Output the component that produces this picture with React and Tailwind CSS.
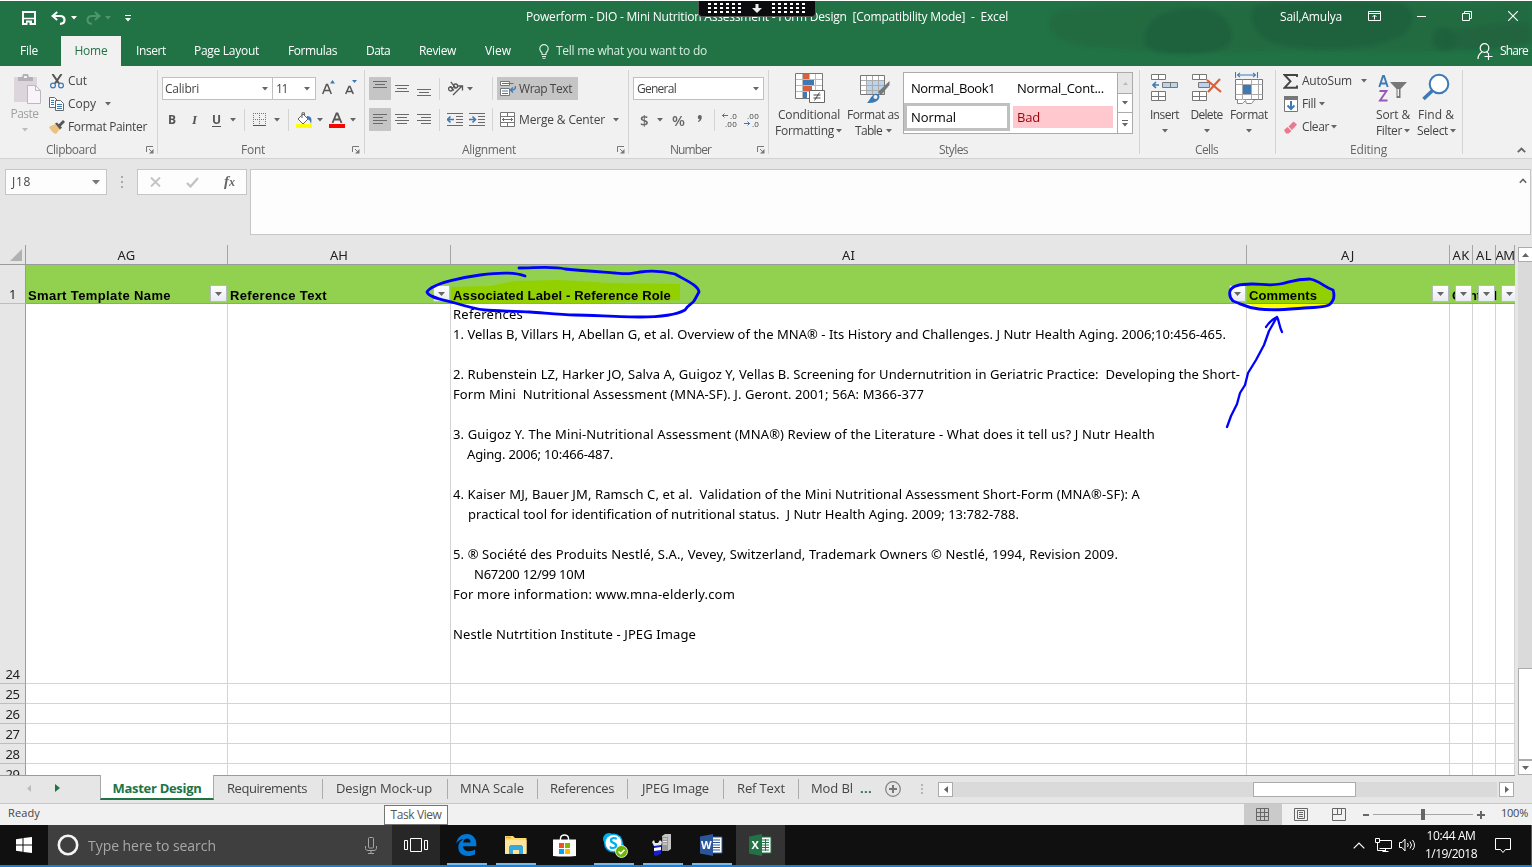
import React, { useLayoutEffect, useRef, useState } from "react";

/* Text set to a given width: the tracking is derived from the measured run. */
function Fit({ w, className = "", children }) {
  const ref = useRef(null);
  const [tracking, setTracking] = useState(0);
  useLayoutEffect(() => {
    const natural = ref.current.getBoundingClientRect().width;
    setTracking((w - natural) / Math.max(1, String(children).length));
  }, []);
  return (
    <span className={"inline-block shrink-0 whitespace-pre " + className} style={{ width: w }}>
      <span ref={ref} style={{ letterSpacing: tracking }}>{children}</span>
    </span>
  );
}

function Icon({ w, h, className = "", children }) {
  return (
    <svg width={w} height={h} viewBox={`0 0 ${w} ${h}`} className={"block shrink-0 " + className} fill="none">
      {children}
    </svg>
  );
}

const Caret = ({ className = "text-[#666]" }) => (
  <Icon w={6} h={4} className={className}><path d="M0 0h6L3 3.5z" fill="currentColor" /></Icon>
);

const Rule = ({ className = "" }) => <div className={"w-px shrink-0 bg-[#d4d4d4] " + className} />;

const Launcher = ({ className = "" }) => (
  <Icon w={8} h={8} className={className}>
    <path d="M.5 6V.5H7" stroke="#777" />
    <path d="M3 3l3 3" stroke="#777" />
    <path d="M7.5 3v4.5H3z" fill="#777" />
  </Icon>
);

/* ---------- Title bar ---------- */

function TitleBar() {
  return (
    <div className="flex h-[35px] items-start text-[12px] leading-[16px] text-white">
      <Icon w={14} h={14} className="ml-[22px] mt-[10px]">
        <path d="M1 1h12v12H1z" stroke="#fff" strokeWidth="2" />
        <path d="M2 7.5h10" stroke="#fff" strokeWidth="1.5" />
        <path d="M4 9.5h6V14H4z" fill="#fff" />
        <path d="M5.5 11.5h2V14h-2z" fill="#217346" />
      </Icon>
      <Icon w={15} h={14} className="ml-[15px] mt-[10px]">
        <path d="M6.2 1L1.5 5l4.7 4" stroke="#fff" strokeWidth="2" />
        <path d="M2 5h7c3 0 4.500 1.700 4.500 4S12 12.800 9 12.800" stroke="#fff" strokeWidth="2.200" />
      </Icon>
      <div className="ml-[5px] mt-[15px]"><Caret className="text-white" /></div>
      <Icon w={15} h={14} className="ml-[9px] mt-[10px]">
        <path d="M8.800 1l4.700 4-4.700 4" stroke="#4f9570" strokeWidth="2" />
        <path d="M13 5H6C3 5 1.500 6.700 1.500 9S3 12.800 6 12.800" stroke="#4f9570" strokeWidth="2" />
      </Icon>
      <div className="ml-[4px] mt-[15px]"><Caret className="text-[#4f9570]" /></div>
      <Icon w={6} h={7} className="ml-[14px] mt-[14px]">
        <path d="M0 .5h6" stroke="#fff" /><path d="M0 3h6L3 6.500z" fill="#fff" />
      </Icon>
      <Fit w={482} className="ml-[395px] mt-[8px]">Powerform - DIO - Mini Nutrition Assessment - Form Design  [Compatibility Mode]  -  Excel</Fit>
      <Fit w={62} className="ml-[272px] mt-[8px]">Sail,Amulya</Fit>
      <Icon w={13} h={10} className="ml-[26px] mt-[10px]">
        <path d="M.5.5h12v9H.5zM.5 2.500h12M6.500 8.500V4.500M4.500 6l2-2 2 2" stroke="#fff" />
      </Icon>
      <div className="ml-[36px] mt-[15px] h-px w-[9px] bg-white" />
      <Icon w={10} h={10} className="ml-[36px] mt-[10px]">
        <path d="M.5 2.500h7v7h-7zM2.500 2.500v-2h7v7h-2" stroke="#fff" />
      </Icon>
      <Icon w={10} h={10} className="ml-[36px] mt-[10px]"><path d="M0 0l10 10M10 0L0 10" stroke="#fff" strokeWidth="1.100" /></Icon>
    </div>
  );
}

function RibbonTabs() {
  return (
    <div className="flex h-[30px] items-center text-[12px] leading-[16px] text-white">
      <Fit w={18} className="ml-[20px]">File</Fit>
      <div className="ml-[23px] flex h-[30px] w-[60px] items-center justify-center bg-[#f1f1f1] text-[#217346]"><Fit w={33}>Home</Fit></div>
      <Fit w={30} className="ml-[15px]">Insert</Fit>
      <Fit w={65} className="ml-[28px]">Page Layout</Fit>
      <Fit w={49} className="ml-[29px]">Formulas</Fit>
      <Fit w={24} className="ml-[29px]">Data</Fit>
      <Fit w={37} className="ml-[29px]">Review</Fit>
      <Fit w={26} className="ml-[29px]">View</Fit>
      <Icon w={10} h={15} className="ml-[28px]">
        <path d="M3 10.500V9C1.500 7.500.8 6.500.8 4.800a4.200 4.200 0 0 1 8.400 0C9.200 6.500 8.500 7.500 7 9v1.500z" stroke="#d6ecdf" strokeWidth="1.200" />
        <path d="M3 12.500h4M3.500 14.300h3" stroke="#d6ecdf" />
      </Icon>
      <Fit w={151} className="ml-[7px] text-[#d6ecdf]">Tell me what you want to do</Fit>
      <Icon w={16} h={17} className="ml-[770px]">
        <circle cx="7.500" cy="5" r="4.300" stroke="#fff" strokeWidth="1.200" />
        <path d="M1 16c0-3.500 1.500-5.500 4-7M9.500 8.800l1.500 1.200M7.500 13.500h8M11.500 10v7" stroke="#fff" strokeWidth="1.200" />
      </Icon>
      <Fit w={28} className="ml-[7px]">Share</Fit>
    </div>
  );
}

/* Brushed darker patches at the right end of the title bar. */
function Brush() {
  return (
    <svg className="absolute left-[1030px] top-0" width="502" height="65">
      <defs><filter id="soft" x="-10%" y="-20%" width="120%" height="140%"><feGaussianBlur stdDeviation="2" /></filter></defs>
      <g fill="#1e613c" filter="url(#soft)">
        <path d="M25 10q80-14 160-6l40-4h150q60 6 127-2v44q-80 14-250 8-100 6-190-4-60-6-37-36z" opacity=".45" />
        <path d="M160 8q30-4 40 18t-22 25q-22 4-50 0-20-6-12-22 8-20 44-21z" opacity=".9" />
        <path d="M224 5q50-8 146-3 22 8 6 30-20 14-76 16-50 0-68-12-16-14-8-31z" opacity=".9" />
        <circle cx="414" cy="38" r="12" opacity=".9" /><path d="M414 32q50-12 88-10v20q-40 10-88 6z" opacity=".6" />
      </g>
    </svg>
  );
}

function Header() {
  return (
    <div className="relative h-[66px] overflow-hidden border-t border-white bg-[#217346]">
      <Brush />
      <div className="relative"><TitleBar /><RibbonTabs /></div>
      <div className="absolute left-[698px] top-[-1px] flex h-[17px] w-[118px] items-center justify-center gap-[10px] rounded-b-[4px] border-x border-b border-[#555] bg-[#0c0c10]">
        <DotGrid />
        <Icon w={10} h={9}><path d="M3.500 0h3v4H10L5 9 0 4h3.500z" fill="#eee" /></Icon>
        <DotGrid />
      </div>
    </div>
  );
}

const DotGrid = () => (
  <Icon w={34} h={10}>
    {[0, 1, 2, 3, 4, 5].map((x) => [0, 1, 2].map((y) => (
      <rect key={x + "-" + y} x={x * 6} y={y * 4} width="3" height="2" fill="#fff" />
    )))}
  </Icon>
);

/* ---------- Ribbon ---------- */

function Group({ label, w, labelClass, width, launcher, children }) {
  return (
    <div className={"flex shrink-0 " + width}>
      <div className="flex min-w-0 flex-1 flex-col">
        <div className="flex h-[76px]">{children}</div>
        <div className="flex h-[17px] items-center leading-[16px] text-[#666]">
          <Fit w={w} className={labelClass}>{label}</Fit>
          {launcher && <Launcher className={launcher} />}
        </div>
      </div>
      <Rule className="mt-[4px] h-[84px]" />
    </div>
  );
}

function Clipboard() {
  return (
    <Group label="Clipboard" w={50} labelClass="ml-[46px]" width="w-[158px]" launcher="ml-[50px]">
      <div className="flex w-[49px] flex-col items-center leading-[16px] text-[#a0a0a0]">
        <Icon w={29} h={31} className="ml-[5px] mt-[8px]">
          <path d="M1 3h23v25H1z" fill="#dcd6dc" /><path d="M5 7V3h4l1-3h5l1 3h4v4z" fill="#b5b0b5" /><path d="M11 2h3v2h-3z" fill="#f1f1f1" />
          <path d="M14.500 11.500h8l5 5v13h-13z" fill="#f8f4fa" stroke="#bcb8bf" /><path d="M22.500 11.500v5h5" stroke="#bcb8bf" />
        </Icon>
        <Fit w={28} className="mt-px">Paste</Fit>
        <div className="mt-[6px]"><Caret className="text-[#bbb]" /></div>
      </div>
      <div className="flex flex-col pt-[4px] leading-[16px]">
        <div className="flex h-[22px] items-center">
          <Icon w={14} h={15} className="ml-[1px]">
            <path d="M2.500 0L9 9.500M11.500 0L5 9.500" stroke="#555" strokeWidth="2" />
            <circle cx="3" cy="11.500" r="2.400" stroke="#3e79b4" strokeWidth="1.200" /><circle cx="11" cy="11.500" r="2.400" stroke="#3e79b4" strokeWidth="1.200" />
          </Icon>
          <Fit w={19} className="ml-[4px]">Cut</Fit>
        </div>
        <div className="mt-[1px] flex h-[22px] items-center">
          <Icon w={15} h={14}>
            <path d="M.5.500h5l3 3v7h-8z" fill="#fff" stroke="#666" /><path d="M2 3.500h3M2 5.500h3M2 7.500h3" stroke="#3e79b4" />
            <path d="M6.500 3.500h5l3 3v7h-8z" fill="#fff" stroke="#666" /><path d="M8 7.500h5M8 9.500h5M8 11.500h5" stroke="#3e79b4" />
          </Icon>
          <Fit w={28} className="ml-[4px]">Copy</Fit>
          <div className="ml-[9px]"><Caret /></div>
        </div>
        <div className="mt-[1px] flex h-[22px] items-center">
          <Icon w={16} h={14}>
            <path d="M0 7l6-3 5 5-4 5q-4-1-7-7z" fill="#ecc281" /><path d="M6 3.500l2-1 5 5-2 2z" fill="#555" /><path d="M9.500 4.500L14 0l2 2-4.500 4.500z" fill="#555" />
          </Icon>
          <Fit w={79} className="ml-[3px]">Format Painter</Fit>
        </div>
      </div>
    </Group>
  );
}

function FontGroup() {
  return (
    <Group label="Font" w={24} labelClass="ml-[83px]" width="w-[207px]" launcher="ml-[87px]">
      <div className="flex flex-col leading-[16px]">
        <div className="mt-[11px] flex h-[23px]">
          <div className="ml-[4px] flex w-[111px] items-center border border-[#c0c0c0] bg-white"><Fit w={34} className="ml-[2px]">Calibri</Fit><div className="ml-[63px]"><Caret /></div></div>
          <div className="ml-[-1px] flex w-[44px] items-center border border-[#c0c0c0] bg-white"><Fit w={11} className="ml-[3px]">11</Fit><div className="ml-[17px]"><Caret /></div></div>
          <Icon w={13} h={15} className="ml-[6px] mt-[3px]"><path d="M.7 14L4.500 4.500h1L9.300 14M2 10.500h6" stroke="#555" strokeWidth="1.500" /><path d="M8 3.500h5L10.500 0z" fill="#3e79b4" /></Icon>
          <Icon w={12} h={15} className="ml-[10px] mt-[3px]"><path d="M.7 14L4 6.500h1L8.300 14M2 11.500h5" stroke="#555" strokeWidth="1.500" /><path d="M7 0h5L9.500 3z" fill="#3e79b4" /></Icon>
        </div>
        <div className="mt-[8px] flex h-[23px] items-center font-bold text-[#555]">
          <Fit w={8} className="ml-[10px]">B</Fit>
          <Fit w={6} className="ml-[16px] font-['Liberation_Serif',serif] text-[13px] italic">I</Fit>
          <Fit w={9} className="ml-[14px] mt-px border-b border-[#555] leading-[12px]">U</Fit>
          <div className="ml-[9px]"><Caret /></div>
          <Rule className="ml-[8px] h-[22px]" />
          <Icon w={13} h={13} className="ml-[8px]"><path d="M.5 0v12M6.500 0v12M12.500 0v12M0 .5h13M0 6.500h13" stroke="#777" strokeDasharray="1 1" /><path d="M0 12.500h13" stroke="#555" /></Icon>
          <div className="ml-[8px]"><Caret /></div>
          <Rule className="ml-[8px] h-[22px]" />
          <Icon w={17} h={16} className="ml-[7px]">
            <path d="M2 7l5-5 5 5-5 5z" fill="#fff" stroke="#666" /><path d="M6 6V.8h2.500V4" stroke="#666" /><path d="M11 4c5 0 5 4 4 8-1-3-1-4-4-5z" fill="#3e79b4" /><path d="M0 12h16v4H0z" fill="#ff0" />
          </Icon>
          <div className="ml-[4px]"><Caret /></div>
          <Icon w={16} h={16} className="ml-[6px]"><path d="M3.500 11L7.500 1.500h1L12.500 11M5 7.500h6" stroke="#555" strokeWidth="1.800" /><path d="M0 12h16v4H0z" fill="#f00" /></Icon>
          <div className="ml-[5px]"><Caret /></div>
        </div>
      </div>
    </Group>
  );
}

const Lines = ({ d }) => <Icon w={14} h={15}><path d={d} stroke="#6a6a6a" /></Icon>;

function AlignmentGroup() {
  return (
    <Group label="Alignment" w={54} labelClass="ml-[97px]" width="w-[264px]" launcher="ml-[101px]">
      <div className="flex flex-col leading-[16px]">
        <div className="mt-[11px] flex h-[23px] items-center">
          <div className="ml-[4px] flex h-[23px] w-[22px] items-center justify-center bg-[#c5c5c5]"><Lines d="M0 .5h14M2 3.500h10M0 6.500h14" /></div>
          <div className="flex w-[22px] justify-center"><Lines d="M0 4.500h14M2 7.500h10M0 10.500h14" /></div>
          <div className="flex w-[22px] justify-center"><Lines d="M0 8.500h14M2 11.500h10M0 14.500h14" /></div>
          <Rule className="ml-[4px] h-[22px]" />
          <Icon w={17} h={15} className="ml-[7px]">
            <g stroke="#555" strokeWidth="1.300">
              <circle cx="3.600" cy="8" r="2" /><path d="M3.300 5.300l3.500 4.200" />
              <circle cx="8.600" cy="5" r="2" /><path d="M3.800.8l4.700 6" />
              <path d="M6 14l8.500-8.500M11 5h4.500v4.500" />
            </g>
          </Icon>
          <div className="ml-[3px]"><Caret /></div>
          <Rule className="ml-[19px] h-[23px]" />
          <div className="ml-[4px] flex h-[23px] w-[81px] items-center bg-[#c5c5c5]">
            <Icon w={16} h={15} className="ml-[3px]">
              <path d="M.5.500h9v4h-9zM.5 7.500h9v7h-9z" fill="#fff" stroke="#777" /><path d="M2 2.500h11.500M2 10h6M2 12.500h6" stroke="#3e79b4" /><path d="M15.500 5c0 4-2 4-4.500 4M13 6.500L10.500 9l2.500 2.500" stroke="#3e79b4" strokeWidth="1.400" />
            </Icon>
            <Fit w={53} className="ml-[3px]">Wrap Text</Fit>
          </div>
        </div>
        <div className="mt-[8px] flex h-[23px] items-center">
          <div className="ml-[4px] flex h-[23px] w-[22px] items-center justify-center bg-[#c5c5c5]"><Lines d="M0 2.500h14M0 5.500h10M0 8.500h14M0 11.500h10" /></div>
          <div className="flex w-[22px] justify-center"><Lines d="M0 2.500h14M2 5.500h10M0 8.500h14M2 11.500h10" /></div>
          <div className="flex w-[22px] justify-center"><Lines d="M0 2.500h14M4 5.500h10M0 8.500h14M4 11.500h10" /></div>
          <Rule className="ml-[4px] h-[22px]" />
          <Icon w={16} h={13} className="ml-[7px]"><path d="M0 .5h16M9 3.500h7M9 6.500h7M9 9.500h7M0 12.500h16" stroke="#6a6a6a" /><path d="M1 6.500h6M3.500 3.500l-3 3 3 3" stroke="#3e79b4" strokeWidth="1.600" /></Icon>
          <Icon w={16} h={13} className="ml-[6px]"><path d="M0 .5h16M9 3.500h7M9 6.500h7M9 9.500h7M0 12.500h16" stroke="#6a6a6a" /><path d="M0 6.500h6M3.500 3.500l3 3-3 3" stroke="#3e79b4" strokeWidth="1.600" /></Icon>
          <Rule className="ml-[7px] h-[23px]" />
          <Icon w={15} h={15} className="ml-[7px]"><path d="M.5.500h14v14H.5zM.5 4.500h14M.5 10.500h14M7.500.500v4M7.500 10.500v4" fill="#fff" stroke="#777" /><path d="M2 7.500h11M4 6L2.500 7.500 4 9M11 6l1.500 1.500L11 9" stroke="#3e79b4" /></Icon>
          <Fit w={86} className="ml-[4px]">Merge &amp; Center</Fit>
          <div className="ml-[8px]"><Caret /></div>
        </div>
      </div>
    </Group>
  );
}

function NumberGroup() {
  return (
    <Group label="Number" w={41} labelClass="ml-[41px]" width="w-[140px]" launcher="ml-[46px]">
      <div className="flex flex-col leading-[16px]">
        <div className="mt-[11px] flex h-[23px]">
          <div className="ml-[4px] flex w-[131px] items-center border border-[#c0c0c0] bg-white"><Fit w={39} className="ml-[3px]">General</Fit><div className="ml-[77px]"><Caret /></div></div>
        </div>
        <div className="mt-[8px] flex h-[23px] items-center text-[#666]">
          <Fit w={8} className="ml-[11px] text-[15px] font-semibold">$</Fit>
          <div className="ml-[9px]"><Caret /></div>
          <Fit w={13} className="ml-[9px] text-[15px] font-semibold">%</Fit>
          <Icon w={5} h={7} className="mb-[3px] ml-[12px]"><path d="M2.500 0a2.200 2.200 0 0 1 2.300 2.300C4.800 5 3 6.500 1 7V6c1-.5 1.500-1 1.500-1.700A2.200 2.200 0 0 1 2.500 0z" fill="#666" /></Icon>
          <Rule className="ml-[12px] h-[22px]" />
          <div className="ml-[7px] flex w-[15px] flex-col text-[8px] leading-[8px] text-[#444]">
            <div className="flex h-[8px] items-center"><Icon w={6} h={5}><path d="M0 2.500h6M2.500.500l-2 2 2 2" stroke="#3e79b4" /></Icon><Fit w={7} className="ml-[2px]">.0</Fit></div>
            <Fit w={12} className="ml-[3px]">.00</Fit>
          </div>
          <div className="ml-[7px] flex w-[15px] flex-col text-[8px] leading-[8px] text-[#444]">
            <Fit w={12} className="ml-[3px]">.00</Fit>
            <div className="flex h-[8px] items-center"><Icon w={6} h={5}><path d="M0 2.500h6M3.500.500l2 2-2 2" stroke="#3e79b4" /></Icon><Fit w={7} className="ml-[2px]">.0</Fit></div>
          </div>
        </div>
      </div>
    </Group>
  );
}

function StylesGroup() {
  return (
    <Group label="Styles" w={29} labelClass="ml-[170px]" width="w-[371px]">
      <div className="ml-[6px] flex w-[68px] flex-col leading-[16px]">
        <Icon w={30} h={31} className="ml-[20px] mt-[7px]">
          <path d="M.5.500h27v25H.5z" fill="#fff" stroke="#777" />
          <path d="M8 1h6v5H8z" fill="#d9603b" /><path d="M8 7h11v5H8z" fill="#3e79b4" /><path d="M8 13h9v5H8z" fill="#d9603b" /><path d="M8 19h4v6H8z" fill="#3e79b4" />
          <path d="M1 6.500h26M1 12.500h26M1 18.500h26M7.500 1v24M14.500 1v5M20.500 1v17" stroke="#bbb" />
          <path d="M14.500 17.500h15v12h-15z" fill="#fff" stroke="#666" /><path d="M18.500 22h7M18.500 25h7M24.500 19.500l-5 8" stroke="#444" />
        </Icon>
        <Fit w={62} className="ml-[3px] mt-[3px]">Conditional</Fit>
        <div className="flex items-center"><Fit w={59}>Formatting</Fit><div className="ml-[2px]"><Caret /></div></div>
      </div>
      <div className="ml-[4px] flex w-[52px] flex-col leading-[16px]">
        <Icon w={30} h={29} className="ml-[13px] mt-[9px]">
          <path d="M.5.500h24v19H.5z" fill="#fff" stroke="#777" /><path d="M7 6h17v13H7z" fill="#bcd3ec" />
          <path d="M1 5.500h23M1 10.500h23M1 15.500h23M6.500 1v18M12.500 1v18M18.500 1v18" stroke="#aaa" />
          <path d="M29.500 6v4L21 20l-3-3z" fill="#777" /><path d="M7 28c2-1 4-8 8-9s6 3 3 6-7 3-11 3z" fill="#3e79b4" /><circle cx="15.500" cy="22" r="2" fill="#f1f1f1" />
        </Icon>
        <Fit w={52} className="mt-[3px]">Format as</Fit>
        <div className="ml-[8px] flex items-center"><Fit w={27}>Table</Fit><div className="ml-[4px]"><Caret /></div></div>
      </div>
      <div className="ml-[4px] mt-[6px] flex h-[62px] w-[230px] border border-[#ababab] bg-white text-[13px] leading-[16px] text-black">
        <div className="flex w-[213px] flex-col">
          <div className="flex h-[30px] items-center"><Fit w={84} className="ml-[7px]">Normal_Book1</Fit><Fit w={87} className="ml-[22px]">Normal_Cont...</Fit></div>
          <div className="flex items-center">
            <div className="flex h-[28px] w-[106px] items-center border-[3px] border-[#c0c0c0] pb-px pl-[4px]"><Fit w={45}>Normal</Fit></div>
            <div className="ml-[3px] flex h-[22px] w-[100px] items-center bg-[#ffc7ce] pb-px pl-[4px] text-[#9c0006]"><Fit w={23}>Bad</Fit></div>
          </div>
        </div>
        <div className="flex w-[15px] flex-col border-l border-[#ababab]">
          <div className="flex h-[20px] items-center justify-center bg-[#e6e6e6]"><Icon w={5} h={3}><path d="M0 3h5L2.500 0z" fill="#bbb" /></Icon></div>
          <div className="flex h-[20px] items-center justify-center border-y border-[#ababab]"><Caret /></div>
          <div className="flex h-[20px] flex-col items-center justify-center gap-[2px]"><div className="h-px w-[6px] bg-[#666]" /><Caret /></div>
        </div>
      </div>
    </Group>
  );
}

function CellsGroup() {
  return (
    <Group label="Cells" w={23} labelClass="ml-[55px]" width="w-[136px]">
      <div className="ml-[9px] flex w-[31px] flex-col items-center leading-[16px]">
        <Icon w={27} h={28} className="mt-[8px]">
          <path d="M.5.500h14v5H.5zM7.500.500v5M.5 17.500h14v9H.5zM.5 22.500h14M7.500 17.500v9" fill="#fff" stroke="#777" />
          <path d="M11.500 8.500h15v5h-15z" fill="#bcd3ec" stroke="#777" /><path d="M19.500 8.500v5" stroke="#777" /><path d="M2 11h6M5 8l-3 3 3 3" stroke="#3e79b4" strokeWidth="1.700" />
        </Icon>
        <Fit w={29} className="mt-[5px]">Insert</Fit><div className="mt-[6px]"><Caret /></div>
      </div>
      <div className="ml-[10px] flex w-[33px] flex-col items-center leading-[16px]">
        <Icon w={30} h={28} className="ml-[1px] mt-[8px]">
          <path d="M.5.500h14v5H.5zM7.500.500v5M.5 17.500h14v9H.5zM.5 22.500h14M7.500 17.500v9" fill="#fff" stroke="#777" />
          <path d="M6.500 8.500h11v5h-11z" fill="#bcd3ec" stroke="#777" /><path d="M15 6l14 12M28 5L16 18" stroke="#d9603b" strokeWidth="2.200" />
        </Icon>
        <Fit w={32} className="mt-[5px]">Delete</Fit><div className="mt-[6px]"><Caret /></div>
      </div>
      <div className="ml-[7px] flex w-[38px] flex-col items-center leading-[16px]">
        <Icon w={28} h={32} className="mt-[6px]">
          <path d="M.5 0v6M22.500 0v6M2 3h19M5 .8L2.500 3 5 5.200M18 .8L20.500 3 18 5.200" stroke="#3e79b4" strokeWidth="1.100" />
          <path d="M.5 7.500h27v20H.5z" fill="#fff" stroke="#777" /><path d="M.5 12.500h27M.5 22.500h27M7.500 7.500v20M16.500 7.500v20M23.500 7.500v20" stroke="#aaa" /><path d="M8 13h8v9H8z" fill="#3e79b4" />
          <path d="M2.500 27.500v4h5l3-3 1 3h5l3-3.500" fill="#fff" stroke="#888" />
        </Icon>
        <Fit w={38} className="mt-[3px]">Format</Fit><div className="mt-[6px]"><Caret /></div>
      </div>
    </Group>
  );
}

function EditingGroup() {
  return (
    <Group label="Editing" w={37} labelClass="ml-[74px]" width="w-[187px]">
      <div className="flex w-[98px] flex-col pt-[4px] leading-[16px]">
        <div className="flex h-[22px] items-center">
          <Icon w={15} h={15} className="ml-[7px]"><path d="M14 3V1H1.500l6 6.300-6 6.500H14V11.500" stroke="#444" strokeWidth="1.900" /></Icon>
          <Fit w={50} className="ml-[4px]">AutoSum</Fit><div className="ml-[9px]"><Caret /></div>
        </div>
        <div className="mt-[1px] flex h-[22px] items-center">
          <Icon w={14} h={16} className="ml-[8px]"><path d="M.5.500h13v15H.5z" fill="#fff" stroke="#777" /><path d="M0 0h14v4H0z" fill="#777" /><path d="M7 5v8M3.500 9.500L7 13l3.500-3.500" stroke="#3e79b4" strokeWidth="2" /></Icon>
          <Fit w={14} className="ml-[4px]">Fill</Fit><div className="ml-[3px]"><Caret /></div>
        </div>
        <div className="mt-[1px] flex h-[22px] items-center">
          <Icon w={13} h={13} className="ml-[8px]"><path d="M4.500 5.500L9.500.500 13 3.500 8 9z" fill="#e8798f" /><path d="M0 9l3.500-3 4 4L4.500 12.500H2z" fill="#e8798f" /></Icon>
          <Fit w={27} className="ml-[5px]">Clear</Fit><div className="ml-[2px]"><Caret /></div>
        </div>
      </div>
      <div className="ml-[2px] flex w-[40px] flex-col leading-[16px]">
        <Icon w={30} h={28} className="ml-[2px] mt-[9px]">
          <path d="M1.300 12L5 1h1l3.700 11M2.500 8.500h6" stroke="#3e79b4" strokeWidth="1.900" /><path d="M1.500 16h7L2 25.500h7.500" stroke="#9a57b5" strokeWidth="1.900" />
          <path d="M12 7h17l-6.500 7v9h-4v-9z" fill="#777" /><path d="M19.500 14h1.500v7h-1.500z" fill="#eee" />
        </Icon>
        <Fit w={34} className="mt-[4px]">Sort &amp;</Fit>
        <div className="flex items-center"><Fit w={26}>Filter</Fit><div className="ml-[2px]"><Caret /></div></div>
      </div>
      <div className="ml-[1px] flex w-[40px] flex-col leading-[16px]">
        <Icon w={28} h={28} className="ml-[5px] mt-[7px]"><circle cx="17" cy="11" r="9.300" fill="#fff" stroke="#3e79b4" strokeWidth="2" /><path d="M10.500 17.500L1.500 26" stroke="#3e79b4" strokeWidth="3.600" /></Icon>
        <Fit w={36} className="ml-[1px] mt-[6px]">Find &amp;</Fit>
        <div className="flex items-center"><Fit w={31}>Select</Fit><div className="ml-[2px]"><Caret /></div></div>
      </div>
    </Group>
  );
}

function Ribbon() {
  return (
    <div className="flex h-[93px] border-b border-[#d2d2d2] bg-[#f1f1f1] text-[12px] text-[#444]">
      <Clipboard /><FontGroup /><AlignmentGroup /><NumberGroup /><StylesGroup /><CellsGroup /><EditingGroup />
      <div className="flex flex-1 items-end justify-end pb-[5px] pr-[6px]"><Icon w={9} h={6}><path d="M.8 5.200L4.500 1.500l3.700 3.700" stroke="#666" strokeWidth="1.800" /></Icon></div>
    </div>
  );
}

/* ---------- Formula bar ---------- */

function FormulaBar() {
  return (
    <div className="flex h-[86px] items-start pt-[10px] text-[12px] text-[#444]">
      <div className="ml-[5px] flex h-[26px] w-[102px] items-center border border-[#c6c6c6] bg-[#fdfdfd]"><Fit w={19} className="ml-[6px]">J18</Fit><Icon w={8} h={5} className="ml-[61px]"><path d="M0 0h8L4 4.500z" fill="#777" /></Icon></div>
      <Icon w={2} h={12} className="ml-[14px] mt-[7px]"><path d="M0 0h2v2H0zM0 5h2v2H0zM0 10h2v2H0z" fill="#aaa" /></Icon>
      <div className="ml-[14px] flex h-[26px] w-[110px] items-center border border-[#c6c6c6] bg-[#fdfdfd]">
        <Icon w={11} h={10} className="ml-[12px]"><path d="M1 .5l9 9M10 .5l-9 9" stroke="#c3c3c3" strokeWidth="1.900" /></Icon>
        <Icon w={13} h={11} className="ml-[25px]"><path d="M1 6l3.500 3.500L12 1" stroke="#c3c3c3" strokeWidth="2.300" /></Icon>
        <span className="ml-[25px] whitespace-nowrap pb-[2px] font-['Liberation_Serif',serif] text-[15px] font-bold italic leading-[16px] text-[#666]">f<span className="text-[12px]">x</span></span>
      </div>
      <div className="ml-[3px] flex h-[66px] w-[1281px] justify-end border border-[#c6c6c6] bg-[#fdfdfd] pr-[3px] pt-[8px]">
        <Icon w={8} h={6}><path d="M.8 4.700L4 1.500l3.200 3.200" stroke="#666" strokeWidth="1.600" /></Icon>
      </div>
    </div>
  );
}

/* ---------- Worksheet ---------- */

const columns = [
  { name: "AG", cls: "w-[202px]", tw: 18 },
  { name: "AH", cls: "w-[223px]", tw: 18 },
  { name: "AI", cls: "w-[796px]", tw: 13 },
  { name: "AJ", cls: "w-[203px]", tw: 14 },
  { name: "AK", cls: "w-[23px]", tw: 17 },
  { name: "AL", cls: "w-[23px]", tw: 16 },
  { name: "AM", cls: "w-[19px]", tw: 19 },
];

const headers = [["Smart Template Name", 143], ["Reference Text", 97], ["Associated Label - Reference Role", 218], ["Comments", 68], ["Control", 45], null, null];

const references = [
  ["References", 70, ""],
  ["1. Vellas B, Villars H, Abellan G, et al. Overview of the MNA® - Its History and Challenges. J Nutr Health Aging. 2006;10:456-465.", 773, ""],
  null,
  ["2. Rubenstein LZ, Harker JO, Salva A, Guigoz Y, Vellas B. Screening for Undernutrition in Geriatric Practice:  Developing the Short-", 787, ""],
  ["Form Mini  Nutritional Assessment (MNA-SF). J. Geront. 2001; 56A: M366-377", 471, ""],
  null,
  ["3. Guigoz Y. The Mini-Nutritional Assessment (MNA®) Review of the Literature - What does it tell us? J Nutr Health", 702, ""],
  ["Aging. 2006; 10:466-487.", 146, "ml-[14px]"],
  null,
  ["4. Kaiser MJ, Bauer JM, Ramsch C, et al.  Validation of the Mini Nutritional Assessment Short-Form (MNA®-SF): A", 687, ""],
  ["practical tool for identification of nutritional status.  J Nutr Health Aging. 2009; 13:782-788.", 551, "ml-[15px]"],
  null,
  ["5. ® Société des Produits Nestlé, S.A., Vevey, Switzerland, Trademark Owners © Nestlé, 1994, Revision 2009.", 665, ""],
  ["N67200 12/99 10M", 111, "ml-[21px]"],
  ["For more information: www.mna-elderly.com", 282, ""],
  null,
  ["Nestle Nutrtition Institute - JPEG Image", 243, ""],
];

const FilterButton = () => (
  <div className="relative flex h-[17px] w-[17px] shrink-0 items-center justify-center border border-[#b5b9c2] bg-gradient-to-b from-white to-[#e9ebf2]">
    <Icon w={7} h={4}><path d="M0 0h7L3.500 4z" fill="#666" /></Icon>
  </div>
);

const RowHead = ({ n, className }) => (
  <div className={"flex w-[26px] shrink-0 items-end justify-center border-b border-r border-b-[#bdbdbd] border-r-[#9b9b9b] bg-[#e6e6e6] text-[13px] leading-[18px] text-[#222] " + className}>
    <Fit w={n > 9 ? 14 : 7}>{n}</Fit>
  </div>
);

function Sheet() {
  return (
    <div className="relative flex h-[531px] font-['Noto_Sans','Open_Sans',sans-serif]">
      <div className="flex w-[1515px] flex-col overflow-hidden border-b border-[#9b9b9b]">
        <div className="flex h-[20px] shrink-0 border-b border-[#9b9b9b] text-[13px] leading-[20px] text-[#222]">
          <div className="flex w-[26px] items-end justify-end border-r border-[#9b9b9b] pb-[3px] pr-[3px]"><Icon w={12} h={12}><path d="M12 0v12H0z" fill="#b1b1b1" /></Icon></div>
          {columns.map((c) => (
            <div key={c.name} className={"flex shrink-0 justify-center overflow-hidden border-r border-[#a5a5a5] " + c.cls}><Fit w={c.tw}>{c.name}</Fit></div>
          ))}
        </div>
        <div className="flex h-[39px] shrink-0">
          <RowHead n={1} className="h-[39px] border-b-[#9b9b9b] leading-[17px]" />
          <div className="flex border-b border-[#9b9b9b] bg-[#92d050]">
            {columns.map((c, i) => (
              <div key={c.name} className={"flex shrink-0 items-end justify-between " + c.cls}>
                <div className="w-0 overflow-visible pl-[2px] font-['Liberation_Sans',Arial,sans-serif] text-[13px] font-bold leading-[15px] text-black">
                  {headers[i] && <Fit w={headers[i][1]}>{headers[i][0]}</Fit>}
                </div>
                <div className={"shrink-0 pb-px " + (i === 6 ? "mr-[-3px]" : "mr-px")}><FilterButton /></div>
              </div>
            ))}
          </div>
        </div>
        <div className="flex h-[380px] shrink-0">
          <RowHead n={24} className="h-[380px]" />
          {columns.map((c, i) => (
            <div key={c.name} className={"shrink-0 border-b border-r border-[#d4d4d4] bg-white " + c.cls}>
              {i === 2 && (
                <div className="flex flex-col pl-[2px] text-[13px] leading-[20px] text-black">
                  {references.map((line, k) => (
                    <div key={k} className="h-[20px]">{line && <Fit w={line[1]} className={line[2]}>{line[0]}</Fit>}</div>
                  ))}
                </div>
              )}
            </div>
          ))}
        </div>
        {[25, 26, 27, 28, 29].map((n) => (
          <div key={n} className="flex h-[20px] shrink-0">
            <RowHead n={n} className="h-[20px]" />
            {columns.map((c) => <div key={c.name} className={"shrink-0 border-b border-r border-[#d4d4d4] bg-white " + c.cls} />)}
          </div>
        ))}
      </div>
      <div className="ml-[3px] flex w-[14px] flex-col overflow-hidden pt-[2px]">
        <div className="flex h-[15px] w-[15px] items-center justify-center border border-[#ababab] bg-white"><Icon w={7} h={4}><path d="M0 4h7L3.500 0z" fill="#666" /></Icon></div>
        <div className="h-[406px] bg-[#dadada]" />
        <div className="h-[92px] w-[16px] border border-[#ababab] bg-white" />
        <div className="flex h-[15px] w-[15px] items-center justify-center border border-[#ababab] bg-white"><Icon w={7} h={4}><path d="M0 0h7L3.500 4z" fill="#666" /></Icon></div>
      </div>
      <Annotations />
    </div>
  );
}

/* Hand-drawn highlighter and pen marks lying over the cells. */
function Annotations() {
  return (
    <>
      <div className="pointer-events-none absolute left-0 top-0 mix-blend-multiply">
        <svg width="1532" height="200" viewBox="0 245 1532 200" className="block">
          <path d="M451 287l39-1 25-5 45-1 50 3 70 1v16l-80 3H451z" fill="#ff0" />
          <path d="M1247 285l28 1 33-7 20 8 6 8-6 10-50 4-25-3-6-3z" fill="#ff0" />
        </svg>
      </div>
      <div className="pointer-events-none absolute left-0 top-0">
        <svg width="1532" height="200" viewBox="0 245 1532 200" fill="none" className="block" stroke="#00f" strokeWidth="2.800" strokeLinecap="round" strokeLinejoin="round">
          <path d="M525 276C515 272 495 273 480 275S432 283 427 292c2 6 18 8 28 11s20 6 30 7 30 1 45 2 30 3 45 3 45 2 65 2 36-2 45-7c3-5 7-6 9-9l5-9c-1-7-14-12-24-18-12-3-22-4-35-2s-12 2-25 1-30-2-50-4c-12-3-30-1-46-1" />
          <path d="M1230 291c2-6 12-7 22-7s18 2 28 0 15-5 30-5c10 2 14 8 23 11 2 6 1 11-4 15-8 3-12 2-25 3s-30 3-45 1-15-4-26-8c-3-3-4-6-3-10z" />
          <path strokeWidth="2.300" d="M1227 427l4-11 6-12 3-11 5-8 3-12 8-13 8-15 5-14 8-14M1266 327c3-5 7-8 11-10 2 3 2 9 5 15" />
        </svg>
      </div>
    </>
  );
}

/* ---------- Sheet tabs and status bar ---------- */

const TabSep = ({ className }) => <div className={"mt-[2px] h-[20px] w-px shrink-0 bg-[#ababab] " + className} />;
const ScrollBox = ({ d, className = "" }) => (
  <div className={"flex h-[15px] w-[15px] shrink-0 items-center justify-center border border-[#ababab] bg-white " + className}><Icon w={4} h={7}><path d={d} fill="#666" /></Icon></div>
);

function SheetTabs() {
  return (
    <div className="flex h-[27px] items-center text-[13px] leading-[18px] text-[#444]">
      <div className="flex h-[27px] items-center pb-[3px]">
        <Icon w={4} h={7} className="ml-[27px]"><path d="M4 0v7L0 3.500z" fill="#bbb" /></Icon>
        <Icon w={5} h={8} className="ml-[24px]"><path d="M0 0v8l5-4z" fill="#217346" /></Icon>
        <div className="relative ml-[40px] mt-[-1px] flex h-[25px] w-[114px] items-center justify-center self-start border-x border-b-2 border-x-[#ababab] border-b-[#217346] bg-white font-bold text-[#217346]"><Fit w={89} className="mt-[2px]">Master Design</Fit></div>
        <Fit w={80} className="ml-[13px]">Requirements</Fit><TabSep className="ml-[15px]" />
        <Fit w={96} className="ml-[13px]">Design Mock-up</Fit><TabSep className="ml-[15px]" />
        <Fit w={64} className="ml-[12px]">MNA Scale</Fit><TabSep className="ml-[13px]" />
        <Fit w={64} className="ml-[12px]">References</Fit><TabSep className="ml-[13px]" />
        <Fit w={67} className="ml-[14px]">JPEG Image</Fit><TabSep className="ml-[14px]" />
        <Fit w={48} className="ml-[13px]">Ref Text</Fit><TabSep className="ml-[13px]" />
        <Fit w={42} className="ml-[12px]">Mod Bl</Fit>
        <Fit w={12} className="ml-[7px] font-bold text-[#217346]">...</Fit>
      </div>
      <Icon w={16} h={16} className="mb-px ml-[13px]"><circle cx="8" cy="8" r="7.300" stroke="#808080" strokeWidth="1.200" /><path d="M8 4v8M4 8h8" stroke="#777" strokeWidth="2" /></Icon>
      <Icon w={2} h={10} className="mb-px ml-[20px]"><path d="M0 0h2v2H0zM0 4h2v2H0zM0 8h2v2H0z" fill="#b5b5b5" /></Icon>
      <ScrollBox d="M4 0v7L0 3.500z" className="ml-[15px]" />
      <div className="flex h-[15px] w-[544px] shrink-0 bg-[#dadada]"><div className="ml-[300px] w-[103px] border border-[#ababab] bg-white" /></div>
      <ScrollBox d="M0 0v7l4-3.500z" className="ml-[2px]" />
    </div>
  );
}

function StatusBar() {
  return (
    <div className="relative flex h-[22px] items-center border-t border-[#c6c6c6] bg-[#f1f1f1] text-[11px] leading-[16px] text-[#444]">
      <Fit w={32} className="mb-[3px] ml-[8px]">Ready</Fit>
      <div className="ml-[1204px] flex h-[21px] w-[38px] items-center justify-center bg-[#cacaca]"><Icon w={13} h={13} className="mb-px mr-px"><path d="M.5.500h12v12H.5zM.5 4.500h12M.5 8.500h12M4.500.500v12M8.500.500v12" stroke="#666" /></Icon></div>
      <Icon w={14} h={13} className="mb-px ml-[12px]"><path d="M.5.500h13v12H.5zM3.500 2.500h7v8h-7zM5 4.500h4M5 6.500h4M5 8.500h4" stroke="#666" /></Icon>
      <Icon w={14} h={13} className="mb-px ml-[24px]"><path d="M.5.500h13v12H.5zM5.500.500v6h-5M5.500 6.500h4v-6" stroke="#666" /></Icon>
      <div className="ml-[17px] h-[2px] w-[6px] bg-[#666]" />
      <div className="ml-[4px] flex w-[100px] items-center">
        <div className="h-px w-[48px] bg-[#a5a5a5]" /><div className="h-[11px] w-[4px] bg-[#666]" /><div className="h-px w-[48px] bg-[#a5a5a5]" />
      </div>
      <Icon w={8} h={8} className="ml-[4px]"><path d="M4 0v8M0 4h8" stroke="#666" strokeWidth="2" /></Icon>
      <Fit w={27} className="mb-[3px] ml-[16px]">100%</Fit>
      <div className="absolute left-[384px] top-[1px] flex h-[20px] w-[64px] items-center justify-center border border-[#767676] bg-white text-[12px] text-[#575757]"><Fit w={51}>Task View</Fit></div>
    </div>
  );
}

/* ---------- Taskbar ---------- */

const AppButton = ({ running = true, className = "", children }) => (
  <div className={"flex h-[40px] w-[49px] shrink-0 flex-col items-center " + className}>
    <div className="flex h-[38px] items-center pt-[2px]">{children}</div>
    <div className={"h-[2px] w-[40px] " + (running ? "bg-[#76b9ed]" : "")} />
  </div>
);

function OfficeIcon({ color, letter, grid }) {
  return (
    <Icon w={23} h={22}>
      <path d="M11 3h11v16H11z" fill="#fff" stroke={color} />
      <path d={grid ? "M13 6h7M13 8.500h7M13 11h7M13 13.500h7M13 16h7M16.500 5v12" : "M13 6h7M13 8.500h7M13 11h7M13 13.500h7M13 16h7"} stroke={color} />
      <path d="M0 2.500L13 0v22L0 19.500z" fill={color} />
      <text x="6.200" y="15" textAnchor="middle" fontSize="11" fontWeight="700" fill="#fff">{letter}</text>
    </Icon>
  );
}

function Taskbar() {
  return (
    <div className="flex h-[42px] items-start border-b-2 border-[#1a7fd4] bg-[#101010]">
      <div className="flex h-[40px] w-[48px] items-center justify-center"><Icon w={16} h={16}><path d="M0 2.200L6.500 1.300V7.500H0zM7.500 1.100L16 0v7.500H7.500zM0 8.500h6.500v6.200L0 13.800zM7.500 8.500H16V16l-8.500-1.100z" fill="#fff" /></Icon></div>
      <div className="flex h-[40px] w-[344px] items-center bg-[#3f3f3f]">
        <Icon w={22} h={22} className="ml-[9px]"><circle cx="11" cy="11" r="9.200" stroke="#f5f5f5" strokeWidth="2.600" /></Icon>
        <Fit w={128} className="ml-[9px] mt-px text-[14px] leading-[20px] text-[#a8a8a8]">Type here to search</Fit>
        <Icon w={12} h={17} className="ml-[149px]"><rect x="3.500" y=".5" width="5" height="10.500" rx="1" stroke="#a5a5a5" /><path d="M.5 9v2.500Q1 13.500 3 13.500h6q2 0 2.500-2V9M6 13.500v3M3 16.500h6" stroke="#a5a5a5" /></Icon>
      </div>
      <div className="flex h-[40px] w-[48px] items-center justify-center bg-[#272727]"><Icon w={24} h={15}><path d="M6.500.500h11v13h-11zM.5 2.500h3v9h-3zM20.500 2.500h3v9h-3z" stroke="#fff" /></Icon></div>
      <AppButton className="ml-[2px]">
        <Icon w={21} h={22}><path d="M.3 9.500C1 4 5 0 10.800 0 17 0 20.300 4.500 20.300 10v2.300H7c.2 3.300 2.800 5 6 5 2.300 0 4.300-.7 6-1.700v4.600c-2 1.200-4.500 1.800-7.200 1.800C6 22 2.300 18.500 2.300 13c0-3.500 2-6.500 5.500-8C5 5 2 6.500.3 9.500zM7.200 8.500h7.300c0-2.500-1.200-4-3.500-4-2 0-3.500 1.500-3.800 4z" fill="#0078d7" /></Icon>
      </AppButton>
      <AppButton><Icon w={22} h={20}><path d="M0 1h8l2 2h11.500v16H0z" fill="#ffd96b" /><path d="M0 5h21.500v13.500H0z" fill="#ffe69b" /><path d="M1 2.500h5" stroke="#e8a33d" strokeWidth="1.500" /><path d="M4 19v-7.500l1.500-1.500h11l1.500 1.500V19h-4v-4H8v4z" fill="#36a9e1" /></Icon></AppButton>
      <AppButton running={false}><Icon w={23} h={23}><path d="M7.500 6V4Q8 1 11.500 1T15.500 4v2" stroke="#fff" strokeWidth="1.400" /><path d="M0 5.500h23V22q-6 .5-11.500.5T0 22z" fill="#fff" /><path d="M6 9h5v5H6z" fill="#f25022" /><path d="M12 9h5v5h-5z" fill="#7fba00" /><path d="M6 15h5v5H6z" fill="#00a4ef" /><path d="M12 15h5v5h-5z" fill="#ffb900" /></Icon></AppButton>
      <AppButton>
        <Icon w={26} h={26} className="ml-[3px]"><circle cx="7" cy="7" r="6" fill="#00aff0" /><circle cx="16" cy="15" r="6" fill="#00aff0" /><circle cx="11.500" cy="11" r="9.500" fill="#00aff0" /><circle cx="11.500" cy="11" r="8" fill="#fff" /><text x="11.500" y="16.500" textAnchor="middle" fontSize="16" fontWeight="700" fill="#00aff0">S</text><circle cx="19.500" cy="19.500" r="6" fill="#6bb700" stroke="#fff" strokeWidth=".8" /><path d="M16.500 19.500l2.200 2.200 3.800-4" stroke="#fff" strokeWidth="1.600" /></Icon>
      </AppButton>
      <AppButton>
        <Icon w={21} h={22}><path d="M10 2l3-2h6v15l-3 2h-6z" fill="#c4c4c4" /><path d="M10 3h6v14h-6z" fill="#999" /><path d="M11 5h4M11 7.500h4M11 10h4" stroke="#eee" /><path d="M0 8l2-2 1 3h3l2-3 2 2-1 4H2z" fill="#e9e9e9" /><path d="M2 12l7-1v9l-5 2-2-1z" fill="#1720c8" /><path d="M2 14l7-1v3l-7 1z" fill="#fff" /></Icon>
      </AppButton>
      <AppButton><OfficeIcon color="#2b579a" letter="W" /></AppButton>
      <AppButton running={false} className="bg-[#333]"><OfficeIcon color="#217346" letter="X" grid /></AppButton>
      <div className="flex h-[40px] flex-1 items-center justify-end">
        <Icon w={12} h={7}><path d="M.7 6.300L6 1l5.300 5.300" stroke="#fff" strokeWidth="1.200" /></Icon>
        <Icon w={17} h={14} className="ml-[10px]"><path d="M4.500 2.500h12v8h-12M.5.500h4v4h-4zM2.500 4.500v8h8M10.500 10.500v3M7.500 13.500h6" stroke="#fff" /></Icon>
        <Icon w={17} h={14} className="ml-[7px]"><path d="M.5 4.500h2.500L6 1v12L3 9.500H.5z" stroke="#fff" /><path d="M8.500 5q1.500 2 0 4M11 3.500q3 3.500 0 7M13.500 2q4 5 0 10" stroke="#fff" /></Icon>
        <div className="ml-[9px] flex w-[52px] flex-col items-center text-[12px] leading-[18px] text-white"><Fit w={49}>10:44 AM</Fit><Fit w={52}>1/19/2018</Fit></div>
        <Icon w={16} h={17} className="ml-[18px] mr-[20px]"><path d="M.5 1.500h15v11h-5L8 15.500l-2.500-3h-5z" stroke="#fff" /></Icon>
        <div className="h-[40px] w-px bg-[#5a5a5a]" />
      </div>
    </div>
  );
}

export default function App() {
  return (
    <div className="flex h-[867px] w-[1532px] flex-col overflow-hidden bg-[#e6e6e6] font-['Open_Sans','Noto_Sans',sans-serif]">
      <Header />
      <Ribbon />
      <FormulaBar />
      <Sheet />
      <SheetTabs />
      <StatusBar />
      <Taskbar />
    </div>
  );
}
